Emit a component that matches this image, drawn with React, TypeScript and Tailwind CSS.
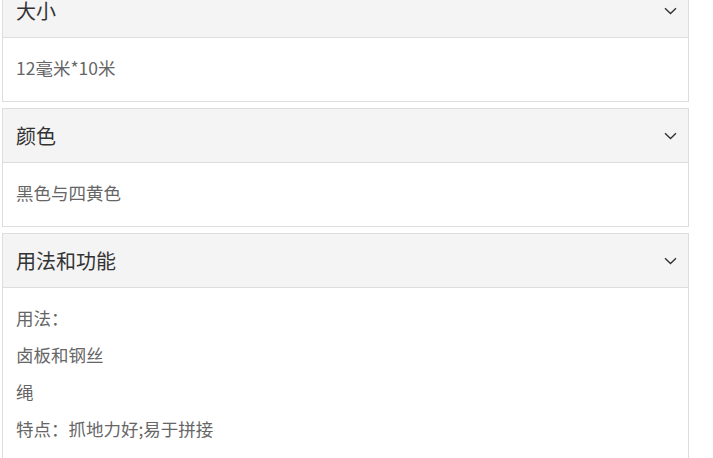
import React from 'react';

type Section = { title: string; lines: string[] };

const sections: Section[] = [
  { title: '大小', lines: ['12毫米*10米'] },
  { title: '颜色', lines: ['黑色与四黄色'] },
  { title: '用法和功能', lines: ['用法：', '卤板和钢丝', '绳', '特点：抓地力好;易于拼接', ''] },
];

function Chevron() {
  return (
    <svg width="13" height="8" viewBox="0 0 13 8" fill="none" className="text-[#333]">
      <path d="M1 1.2 6.5 6.5 12 1.2" stroke="currentColor" strokeWidth="1.4" />
    </svg>
  );
}

function Panel({ section }: { section: Section }) {
  return (
    <div className="border border-[#dddddd] bg-white">
      <div className="flex h-[54px] items-center justify-between border-b border-[#dddddd] bg-[#f4f4f4] pl-[13px] pr-[11px]">
        <span className="text-[20px] text-[#333]">{section.title}</span>
        <Chevron />
      </div>
      <div className="flex flex-col gap-[13px] px-[13px] pt-[18px] pb-[21px]">
        {section.lines.map((line, i) => (
          <p key={i} className="h-[24px] text-[17.5px] leading-[24px] text-[#666]">
            {line}
          </p>
        ))}
      </div>
    </div>
  );
}

export default function App() {
  return (
    <div
      className="h-[458px] overflow-hidden bg-white"
      style={{ fontFamily: '"Noto Sans CJK SC", "Noto Sans", sans-serif' }}
    >
      <div className="-mt-[17px] ml-[2px] flex w-[687px] flex-col gap-[6px]">
        {sections.map((s) => (
          <Panel key={s.title} section={s} />
        ))}
      </div>
    </div>
  );
}
